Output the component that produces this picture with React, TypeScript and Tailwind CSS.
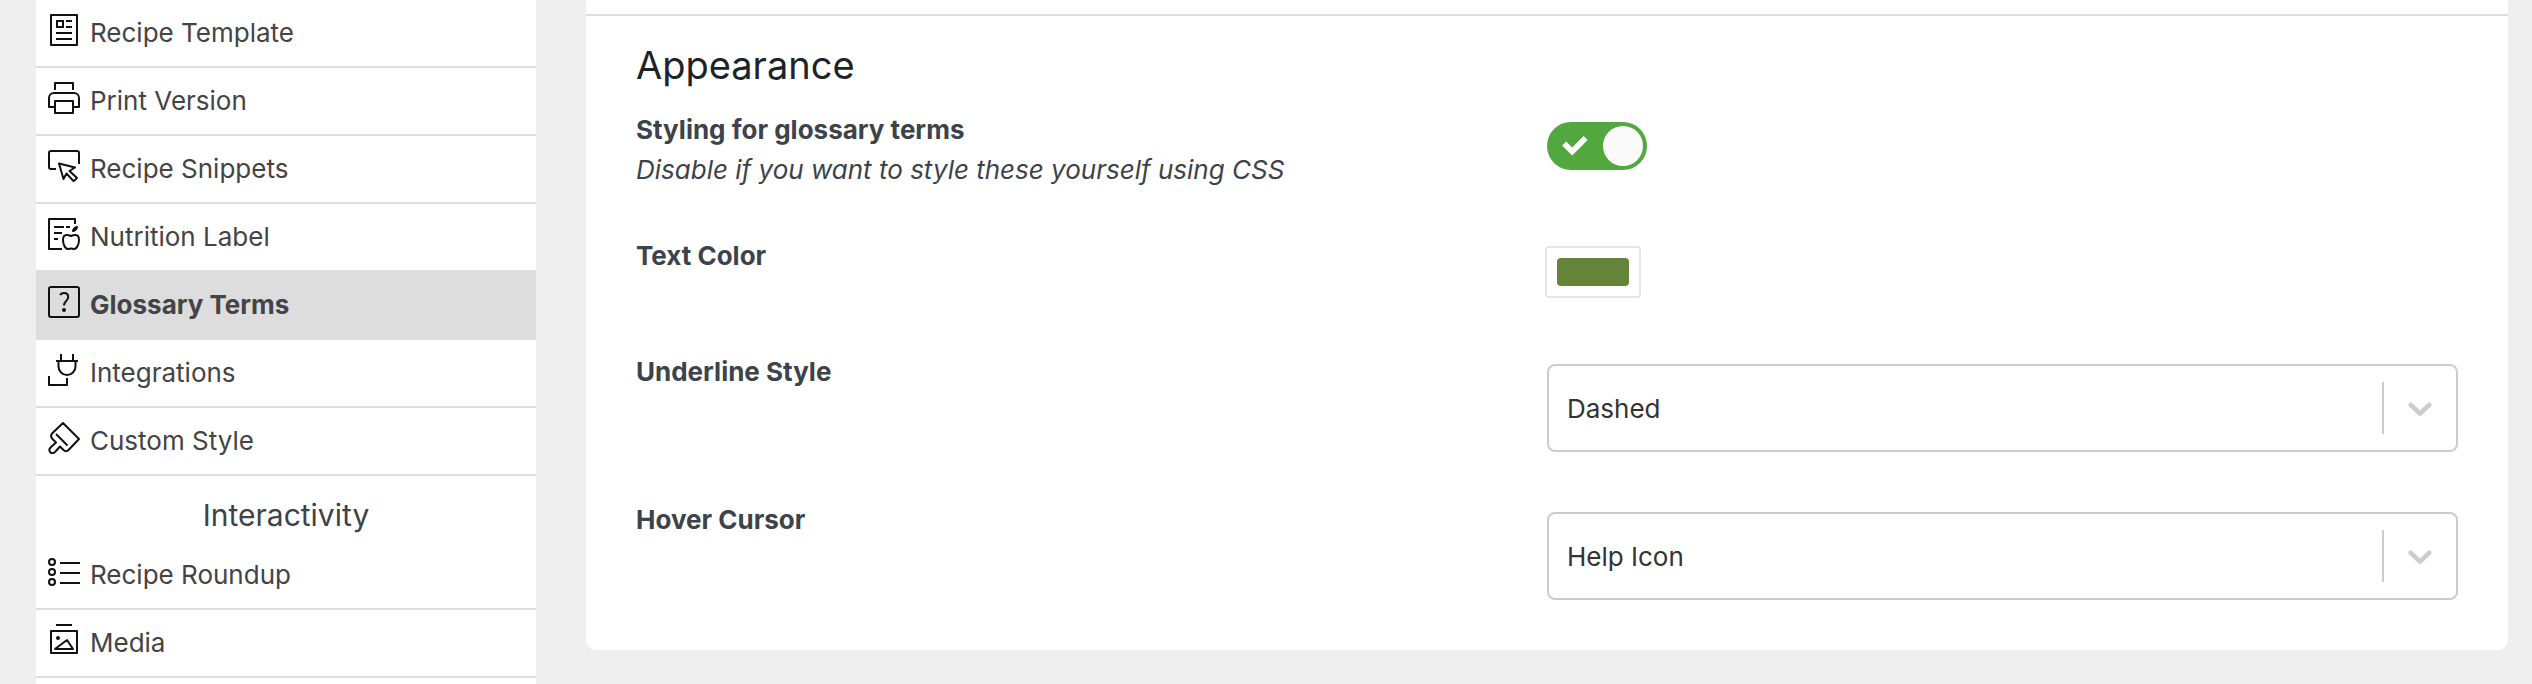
import { useState, type ReactNode } from 'react';
import clsx from 'clsx';

interface MenuItem {
  id: string;
  label: string;
  icon: ReactNode;
}

interface Option {
  value: string;
  label: string;
}

// --- Menu Icons ---
function MenuIcon({ children }: { children: ReactNode }) {
  return (
    <svg viewBox="0 0 32 32" className="mb-1.5 h-8 w-8 shrink-0" fill="none" stroke="#111111" strokeWidth="2" aria-hidden="true">
      {children}
    </svg>
  );
}

const appearanceItems: MenuItem[] = [
  {
    id: 'recipeTemplate',
    label: 'Recipe Template',
    icon: (
      <>
        <rect x="3" y="1" width="26" height="30" strokeLinejoin="round" />
        <rect x="9" y="7" width="6" height="6" />
        <path d="M18 7h6M18 13h6M8 19h16M8 25h16" />
      </>
    ),
  },
  {
    id: 'printVersion',
    label: 'Print Version',
    icon: (
      <>
        <path d="M7 8V1h18v7" strokeLinejoin="round" />
        <path d="M7 25H1v-9a5 5 0 0 1 5-5h20a5 5 0 0 1 5 5v9h-6" strokeLinejoin="round" />
        <rect x="7" y="19" width="18" height="12" strokeLinejoin="round" />
      </>
    ),
  },
  {
    id: 'recipeSnippets',
    label: 'Recipe Snippets',
    icon: (
      <>
        <path d="M8 19H3a2 2 0 0 1-2-2V3a2 2 0 0 1 2-2h26a2 2 0 0 1 2 2v11" />
        <path d="M11 13.5l16 4-5.5 3.5 7.5 7-3.5 3.2-7-7.7-3 5.5z" strokeLinejoin="round" />
      </>
    ),
  },
  {
    id: 'nutritionLabel',
    label: 'Nutrition Label',
    icon: (
      <>
        <path d="M27 6V1H1v30h13" strokeLinejoin="round" />
        <path d="M6 9h10M18 9h4M6 15h8M6 21h4" />
        <path d="M23 18c-1.5-.7-3-1-4.5-1C16 17 15 19.5 15 22c0 4 2 9 5 9 1.2 0 1.8-.5 3-.5s1.8.5 3 .5c3 0 5-5 5-9 0-2.5-1-5-3.5-5-1.5 0-3 .3-4.5 1z" />
        <path d="M24.5 13.5c0-3 2-5 5-5 0 3-2 5-5 5z" fill="#111111" strokeWidth="1" />
      </>
    ),
  },
  {
    id: 'glossaryTerms',
    label: 'Glossary Terms',
    icon: (
      <>
        <rect x="1" y="1" width="30" height="30" rx="2" />
        <path d="M12 9c1-1.5 2.5-2 4-2 2.5 0 4.2 1.5 4.2 4 0 4-4.2 4-4.2 8.5" />
        <circle cx="16" cy="24" r="2" fill="#111111" stroke="none" />
      </>
    ),
  },
  {
    id: 'integrations',
    label: 'Integrations',
    icon: (
      <>
        <path d="M13 0v7M25 0v7M8 7h22M10.5 7v5.5a8.5 8.5 0 0 0 17 0V7" />
        <path d="M1 22v9h18v-7" strokeLinejoin="round" />
      </>
    ),
  },
  {
    id: 'customStyle',
    label: 'Custom Style',
    icon: (
      <>
        <path d="M15 1l16 16-10.5 11c-1.5 1.5-3.5 1.5-5 0L12 24.5 7 30c-3.5 3-7.5-1-4.5-4.5l5.5-5L4.5 17c-1.8-1.8-1.8-4 0-6z" strokeLinejoin="round" />
        <path d="M8 12l11.5 11.5" />
      </>
    ),
  },
];

const interactivityItems: MenuItem[] = [
  {
    id: 'recipeRoundup',
    label: 'Recipe Roundup',
    icon: (
      <>
        <circle cx="4" cy="6" r="3" />
        <circle cx="4" cy="16" r="3" />
        <circle cx="4" cy="26" r="3" />
        <path d="M12 7h20M12 17h20M12 27h20" />
      </>
    ),
  },
  {
    id: 'media',
    label: 'Media',
    icon: (
      <>
        <path d="M8 1h16" />
        <rect x="3" y="7" width="26" height="22" strokeLinejoin="round" />
        <circle cx="10" cy="14" r="2" fill="#111111" stroke="none" />
        <path d="M7 25h18l-6-9z" strokeLinejoin="round" />
      </>
    ),
  },
];

function MenuLinks({ items, active, onSelect }: { items: MenuItem[]; active: string; onSelect: (id: string) => void }) {
  return (
    <>
      {items.map((item) => (
        <a
          key={item.id}
          href={`#${item.id}`}
          onClick={() => onSelect(item.id)}
          className={clsx(
            'flex h-[68px] items-center gap-2.5 border-b-2 border-[#dddddd] px-3 text-[26px] leading-10 text-[#444444]',
            active === item.id && 'bg-[#dddddd] font-bold'
          )}
        >
          <MenuIcon>{item.icon}</MenuIcon>
          {item.label}
        </a>
      ))}
    </>
  );
}

// --- Settings ---
function SettingRow({ id, label, description, children }: { id: string; label: string; description?: string; children: ReactNode }) {
  return (
    <div className="grid min-h-[70px] grid-cols-2">
      <div className="text-[26px] leading-10">
        <label htmlFor={id} className="block font-bold">{label}</label>
        {description && <p className="italic">{description}</p>}
      </div>
      <div className="pt-3">{children}</div>
    </div>
  );
}

function SelectField({ id, value, options, onChange }: { id: string; value: string; options: Option[]; onChange: (value: string) => void }) {
  return (
    <div className="relative mb-0.5">
      <select
        id={id}
        value={value}
        onChange={(e) => onChange(e.target.value)}
        className="h-[88px] w-full appearance-none rounded-lg border-2 border-[#cccccc] bg-white px-[18px] text-[26px] text-[#333333]"
      >
        {options.map((option) => (
          <option key={option.value} value={option.value}>{option.label}</option>
        ))}
      </select>
      <div className="pointer-events-none absolute inset-y-0 right-0 flex items-center pr-[18px]">
        <span className="mr-4 h-[52px] w-0.5 bg-[#cccccc]" />
        <svg viewBox="0 0 20 20" className="h-10 w-10" fill="#cccccc" aria-hidden="true">
          <path d="M4.516 7.548c0.436-0.446 1.043-0.481 1.576 0l3.908 3.747 3.908-3.747c0.533-0.481 1.141-0.446 1.574 0 0.436 0.445 0.408 1.197 0 1.615-0.406 0.418-4.695 4.502-4.695 4.502-0.217 0.223-0.502 0.335-0.787 0.335s-0.570-0.112-0.789-0.335c0 0-4.287-4.084-4.695-4.502s-0.436-1.170 0-1.615z" />
        </svg>
      </div>
    </div>
  );
}

const underlineOptions: Option[] = [
  { value: 'none', label: 'None' },
  { value: 'solid', label: 'Solid' },
  { value: 'dashed', label: 'Dashed' },
  { value: 'dotted', label: 'Dotted' },
];

const cursorOptions: Option[] = [
  { value: 'default', label: 'Default' },
  { value: 'pointer', label: 'Pointer' },
  { value: 'help', label: 'Help Icon' },
];

export default function App() {
  const [active, setActive] = useState('glossaryTerms');
  const [settings, setSettings] = useState({
    styling: true,
    underline: 'dashed',
    cursor: 'help',
  });

  return (
    <div className="flex min-h-screen bg-[#efefef] pr-6 pl-9 font-['Inter','Liberation_Sans',sans-serif] text-[#3c434a]">
      {/* Sidebar */}
      <nav className="w-[500px] shrink-0 bg-white">
        <MenuLinks items={appearanceItems} active={active} onSelect={setActive} />
        <h2 className="pt-5 pb-2 text-center text-[30px] leading-[38px]">Interactivity</h2>
        <MenuLinks items={interactivityItems} active={active} onSelect={setActive} />
      </nav>

      {/* Settings panel */}
      <main className="mb-[34px] ml-[50px] flex-1 self-start rounded-b-[10px] bg-white">
        <div className="h-4 border-b-2 border-[#dddddd]" />
        <section className="px-[50px] pt-6 pb-12">
          <h2 className="mb-5 text-[38px] leading-[50px] text-[#1d2327]">Appearance</h2>

          <div className="flex flex-col gap-[46px]">
            <SettingRow id="styling" label="Styling for glossary terms" description="Disable if you want to style these yourself using CSS">
              <label className="relative block h-12 w-[100px] cursor-pointer">
                <input
                  id="styling"
                  type="checkbox"
                  role="switch"
                  checked={settings.styling}
                  onChange={(e) => setSettings({ ...settings, styling: e.target.checked })}
                  className="peer block h-12 w-[100px] appearance-none rounded-full bg-[#4d4d4d] checked:bg-[#52a83f]"
                />
                <svg viewBox="0 0 14 11" className="absolute top-[14px] left-[15px] hidden h-[21px] w-[27px] peer-checked:block" fill="#ffffff" aria-hidden="true">
                  <path d="M11.264 0L5.26 6.004 2.103 2.847 0 4.95l5.26 5.26 8.108-8.107L11.264 0" />
                </svg>
                <span className="absolute top-1 left-1 h-10 w-10 rounded-full bg-[#fafafa] peer-checked:left-14" />
              </label>
            </SettingRow>

            <SettingRow id="textColor" label="Text Color">
              <button id="textColor" type="button" className="-mt-0.5 -ml-0.5 block rounded-sm border-2 border-[#e5e5e5] bg-white p-2.5">
                <span className="block h-7 w-[72px] rounded-sm bg-[#64843a]" />
              </button>
            </SettingRow>

            <SettingRow id="underline" label="Underline Style">
              <SelectField
                id="underline"
                value={settings.underline}
                options={underlineOptions}
                onChange={(underline) => setSettings({ ...settings, underline })}
              />
            </SettingRow>

            <SettingRow id="cursor" label="Hover Cursor">
              <SelectField
                id="cursor"
                value={settings.cursor}
                options={cursorOptions}
                onChange={(cursor) => setSettings({ ...settings, cursor })}
              />
            </SettingRow>
          </div>
        </section>
      </main>
    </div>
  );
}
